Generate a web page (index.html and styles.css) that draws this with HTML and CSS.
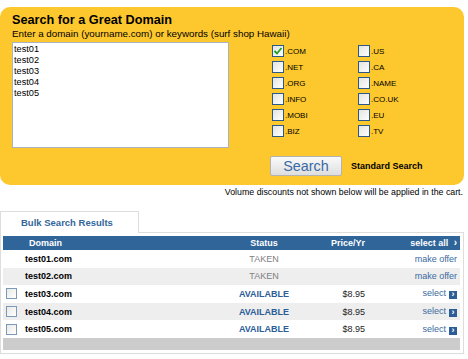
FILE: index.html
```html
<!DOCTYPE html>
<html lang="en">
<head>
    <meta charset="UTF-8">
    <title>Bulk Domain Search</title>
    <link rel="stylesheet" href="styles.css">
</head>
<body>
    <div class="page">
        <div class="search-panel">
            <h1>Search for a Great Domain</h1>
            <p class="hint">Enter a domain (yourname.com) or keywords (surf shop Hawaii)</p>
            <div class="search-body">
                <textarea class="domains">test01
test02
test03
test04
test05</textarea>
                <div class="options">
                    <div class="tlds">
                        <label class="tld"><span class="cb"><svg width="10" height="10" viewBox="0 0 10 10"><path d="M1.5 5 L4 7.5 L8.5 2" fill="none" stroke="#21a121" stroke-width="1.8"/></svg></span>.COM</label>
                        <label class="tld"><span class="cb"></span>.US</label>
                        <label class="tld"><span class="cb"></span>.NET</label>
                        <label class="tld"><span class="cb"></span>.CA</label>
                        <label class="tld"><span class="cb"></span>.ORG</label>
                        <label class="tld"><span class="cb"></span>.NAME</label>
                        <label class="tld"><span class="cb"></span>.INFO</label>
                        <label class="tld"><span class="cb"></span>.CO.UK</label>
                        <label class="tld"><span class="cb"></span>.MOBI</label>
                        <label class="tld"><span class="cb"></span>.EU</label>
                        <label class="tld"><span class="cb"></span>.BIZ</label>
                        <label class="tld"><span class="cb"></span>.TV</label>
                    </div>
                    <div class="search-row">
                        <button class="search-btn">Search</button>
                        <span class="standard">Standard Search</span>
                    </div>
                </div>
            </div>
        </div>

        <p class="notice">Volume discounts not shown below will be applied in the cart.</p>

        <div class="tabs">
            <div class="tab">Bulk Search Results</div>
        </div>

        <div class="results">
            <table class="result-table">
                <colgroup>
                    <col class="c-cb">
                    <col class="c-domain">
                    <col class="c-status">
                    <col class="c-price">
                    <col>
                </colgroup>
                <thead>
                    <tr>
                        <th></th>
                        <th class="domain">Domain</th>
                        <th class="status">Status</th>
                        <th class="price">Price/Yr</th>
                        <th class="action">select all <span class="chev">&rsaquo;</span></th>
                    </tr>
                </thead>
                <tbody>
                    <tr>
                        <td></td>
                        <td class="domain">test01.com</td>
                        <td class="status taken">TAKEN</td>
                        <td class="price"></td>
                        <td class="action"><a href="#">make offer</a></td>
                    </tr>
                    <tr class="alt">
                        <td></td>
                        <td class="domain">test02.com</td>
                        <td class="status taken">TAKEN</td>
                        <td class="price"></td>
                        <td class="action"><a href="#">make offer</a></td>
                    </tr>
                    <tr>
                        <td><span class="row-cb"></span></td>
                        <td class="domain">test03.com</td>
                        <td class="status available">AVAILABLE</td>
                        <td class="price">$8.95</td>
                        <td class="action"><a href="#">select</a><span class="go">&rsaquo;</span></td>
                    </tr>
                    <tr class="alt">
                        <td><span class="row-cb"></span></td>
                        <td class="domain">test04.com</td>
                        <td class="status available">AVAILABLE</td>
                        <td class="price">$8.95</td>
                        <td class="action"><a href="#">select</a><span class="go">&rsaquo;</span></td>
                    </tr>
                    <tr>
                        <td><span class="row-cb"></span></td>
                        <td class="domain">test05.com</td>
                        <td class="status available">AVAILABLE</td>
                        <td class="price">$8.95</td>
                        <td class="action"><a href="#">select</a><span class="go">&rsaquo;</span></td>
                    </tr>
                </tbody>
            </table>
            <div class="results-foot"></div>
        </div>
    </div>
</body>
</html>
```

FILE: styles.css
```css
body {
    margin: 0;
    font-family: 'Liberation Sans', Arial, sans-serif;
    color: #000;
    background: #fff;
}

.page {
    width: 464px;
    padding-top: 7px;
}

/* yellow search box */

.search-panel {
    background: #fdc72e;
    border-radius: 10px;
    padding: 6px 12px 9px 12px;
}

.search-panel h1 {
    margin: 0;
    font-size: 12.7px;
    line-height: 15px;
    font-weight: bold;
}

.hint {
    margin: 0;
    font-size: 9.8px;
    line-height: 12px;
}

.search-body {
    display: flex;
    margin-top: 2px;
}

.domains {
    box-sizing: border-box;
    width: 217px;
    height: 106px;
    margin: 0;
    padding: 1px 1px;
    border: 1px solid #a9b4c2;
    font-family: 'Liberation Sans', Arial, sans-serif;
    font-size: 9.2px;
    line-height: 11px;
    resize: none;
    outline: none;
    overflow: hidden;
}

.options {
    margin-left: 41px;
    padding-top: 1px;
}

.tlds {
    display: grid;
    grid-template-columns: 86px 86px;
    grid-auto-rows: 16px;
}

.tld {
    display: flex;
    align-items: center;
    font-size: 8px;
}

.cb {
    box-sizing: border-box;
    width: 12px;
    height: 12px;
    margin: 0 1px 0 2px;
    border: 1px solid #2b5a86;
    background: linear-gradient(135deg, #e4e3dd, #ffffff);
    display: flex;
    align-items: center;
    justify-content: center;
}

.search-row {
    display: flex;
    align-items: center;
    margin-top: 17px;
}

.search-btn {
    width: 72px;
    height: 20px;
    padding: 0;
    border: 1px solid #b3b3b3;
    border-radius: 2px;
    background: linear-gradient(#fafafa, #dedede);
    color: #3a6aa6;
    font-family: 'Liberation Sans', Arial, sans-serif;
    font-size: 14.4px;
    line-height: 18px;
}

.standard {
    margin-left: 9px;
    font-size: 9px;
    font-weight: bold;
}

.notice {
    margin: 2px 1px 0 0;
    text-align: right;
    font-size: 8.8px;
    line-height: 11px;
}

/* results */

.tabs {
    display: flex;
    margin-top: 13px;
}

.tab {
    position: relative;
    width: 117px;
    height: 21px;
    margin-bottom: -1px;
    padding-left: 20px;
    border: 1px solid #dddddd;
    border-bottom: none;
    background: #fff;
    color: #336699;
    font-size: 9.5px;
    font-weight: bold;
    line-height: 21px;
}

.results {
    border: 1px solid #dddddd;
    padding: 3px 3px 3px 2px;
}

.result-table {
    width: 100%;
    border-collapse: collapse;
    table-layout: fixed;
    font-size: 9px;
}

.c-cb { width: 19px; }
.c-domain { width: 192px; }
.c-status { width: 100px; }
.c-price { width: 56px; }

.result-table th {
    height: 13px;
    padding: 0;
    background: #30659a;
    color: #fff;
    font-weight: bold;
    line-height: 13px;
}

.result-table td {
    height: 17.6px;
    padding: 0;
    vertical-align: middle;
}

.result-table tr.alt td {
    background: #eeeeee;
}

.result-table .domain {
    text-align: left;
    padding-left: 3px;
}

.result-table th.domain {
    padding-left: 7px;
}

td.domain {
    font-weight: bold;
}

.status {
    text-align: center;
}

.taken {
    color: #808080;
}

.available {
    color: #2c5d97;
    font-weight: bold;
}

.price {
    text-align: right;
    padding-right: 5px !important;
    color: #222;
}

.action {
    text-align: right;
    padding-right: 3px !important;
}

.action a {
    color: #3a6aa0;
    text-decoration: none;
}

.chev {
    margin-left: 3px;
    font-size: 10px;
}

.go {
    display: inline-block;
    width: 8px;
    height: 8px;
    margin-left: 3px;
    background: #2c5d97;
    color: #fff;
    font-size: 9px;
    font-weight: bold;
    line-height: 7px;
    text-align: center;
    vertical-align: -1px;
}

.row-cb {
    display: block;
    box-sizing: border-box;
    width: 11px;
    height: 11px;
    margin-left: 3px;
    border: 1px solid #7d99b8;
    background: linear-gradient(135deg, #e8e8e4, #ffffff);
}

.results-foot {
    height: 12px;
    background: #cccccc;
}
```
